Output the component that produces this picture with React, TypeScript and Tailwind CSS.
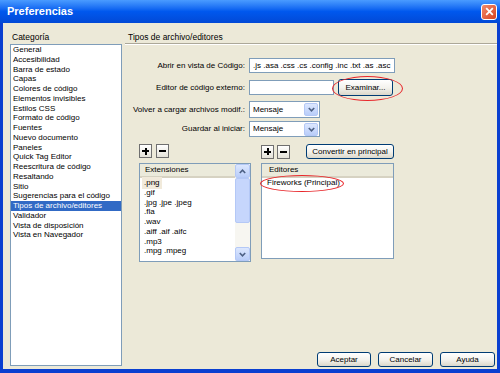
const categorias = [
  "General",
  "Accesibilidad",
  "Barra de estado",
  "Capas",
  "Colores de código",
  "Elementos invisibles",
  "Estilos CSS",
  "Formato de código",
  "Fuentes",
  "Nuevo documento",
  "Paneles",
  "Quick Tag Editor",
  "Reescritura de código",
  "Resaltando",
  "Sitio",
  "Sugerencias para el código",
  "Tipos de archivo/editores",
  "Validador",
  "Vista de disposición",
  "Vista en Navegador",
]

const extensiones = [
  ".png",
  ".gif",
  ".jpg .jpe .jpeg",
  ".fla",
  ".wav",
  ".aiff .aif .aifc",
  ".mp3",
  ".mpg .mpeg",
]

function XpButton({ label, className = "" }: { label: string; className?: string }) {
  return (
    <div
      className={`flex items-center justify-center rounded-[3px] border border-[#003C74] bg-linear-to-b from-white via-[#F4F3EE] to-[#DCD8CA] text-black ${className}`}
    >
      {label}
    </div>
  )
}

function SmallButton({ minus }: { minus?: boolean }) {
  return (
    <div className="flex h-[14px] w-[13px] items-center justify-center border border-[#6F6F6F] bg-linear-to-b from-white to-[#E4E2D8]">
      {minus ? (
        <div className="h-[2px] w-[7px] bg-black" />
      ) : (
        <div className="relative h-[7px] w-[7px]">
          <div className="absolute left-0 top-[2.5px] h-[2px] w-[7px] bg-black" />
          <div className="absolute left-[2.5px] top-0 h-[7px] w-[2px] bg-black" />
        </div>
      )}
    </div>
  )
}

function Chevron({ up }: { up?: boolean }) {
  return (
    <svg width="7" height="5" viewBox="0 0 7 5">
      <path
        d={up ? "M0.8 4 L3.5 1.2 L6.2 4" : "M0.8 1 L3.5 3.8 L6.2 1"}
        fill="none"
        stroke="#4D6185"
        strokeWidth="1.6"
      />
    </svg>
  )
}

function ArrowBox({ up, className = "" }: { up?: boolean; className?: string }) {
  return (
    <div
      className={`flex items-center justify-center rounded-[2px] border border-[#B4C8F6] bg-linear-to-b from-[#DCE7FE] to-[#B9CDF9] ${className}`}
    >
      <Chevron up={up} />
    </div>
  )
}

function Select({ value }: { value: string }) {
  return (
    <div className="flex h-full w-[71px] items-center border border-[#7F9DB9] bg-white pl-[3px] pr-[1px]">
      <span className="flex-1">{value}</span>
      <ArrowBox className="h-[13px] w-[14px]" />
    </div>
  )
}

export default function App() {
  return (
    <div className="relative flex h-[373px] w-[500px] flex-col overflow-hidden bg-[#0A3FD0] font-['Liberation_Sans',Arial,sans-serif] text-[8px] text-black">
      {/* Title bar */}
      <div className="flex h-[23px] items-center justify-between bg-linear-to-b from-[#4A9BFF] via-[#0058EE] to-[#0249D6] pl-[7px] pr-[3px]">
        <span className="text-[11px] font-bold text-white">Preferencias</span>
        <div className="flex h-[16px] w-[16px] items-center justify-center rounded-[3px] border border-white bg-linear-to-br from-[#F08A6A] to-[#D8401A]">
          <svg width="9" height="9" viewBox="0 0 9 9">
            <path d="M1.2 1.2 L7.8 7.8 M7.8 1.2 L1.2 7.8" stroke="white" strokeWidth="1.8" />
          </svg>
        </div>
      </div>

      {/* Body */}
      <div className="mx-[3px] mb-[4px] flex flex-1 bg-[#ECE9D8]">
        {/* Category column */}
        <div className="flex w-[119px] flex-col pb-[3px] pl-[7px] pt-[9px]">
          <div className="h-[10px] leading-[10px] pl-[2px] text-[8.5px]">Categoría</div>
          <div className="mt-[2px] flex-1 border border-[#7F9DB9] bg-white">
            {categorias.map((c) => (
              <div
                key={c}
                className={`h-[9.75px] whitespace-nowrap pl-[2px] leading-[9.75px] ${
                  c === "Tipos de archivo/editores" ? "bg-[#316AC5] text-white" : ""
                }`}
              >
                {c}
              </div>
            ))}
          </div>
        </div>

        {/* Settings panel */}
        <div className="ml-[3px] flex flex-1 flex-col">
          <div className="box-content h-[10px] pl-[3px] pt-[9px] text-[8.5px] leading-[10px]">Tipos de archivo/editores</div>
          <div className="mt-[1px] h-[1px] bg-[#ACA899]" />
          <div className="h-[1px] bg-white" />

          <div className="mt-[13px] flex flex-col">
            <div className="flex h-[15px] items-center">
              <div className="w-[124px] pr-[4px] text-right">Abrir en vista de Código:</div>
              <div className="flex h-full w-[146px] items-center whitespace-nowrap border border-[#7F9DB9] bg-white pl-[3px]">
                .js .asa .css .cs .config .inc .txt .as .asc
              </div>
            </div>
            <div className="mt-[6px] flex h-[17px] items-center">
              <div className="w-[124px] pr-[4px] text-right">Editor de código externo:</div>
              <div className="h-[15px] w-[85px] border border-[#7F9DB9] bg-white" />
              <XpButton label="Examinar..." className="ml-[4px] h-full w-[55px]" />
            </div>
            <div className="mt-[5px] flex h-[17px] items-center">
              <div className="w-[124px] whitespace-nowrap pr-[4px] text-right">Volver a cargar archivos modif.:</div>
              <Select value="Mensaje" />
            </div>
            <div className="mt-[3px] flex h-[16px] items-center">
              <div className="w-[124px] pr-[4px] text-right">Guardar al iniciar:</div>
              <Select value="Mensaje" />
            </div>
          </div>

          {/* Lists */}
          <div className="mt-[7px] flex gap-[10px] pl-[14px]">
            <div className="flex w-[112px] flex-col">
              <div className="flex h-[14px] gap-[4px]">
                <SmallButton />
                <SmallButton minus />
              </div>
              <div className="mt-[5px] flex h-[99px] border border-[#7F9DB9] bg-white">
                <div className="flex flex-1 flex-col overflow-hidden">
                  <div className="flex h-[14px] items-center border-b-2 border-[#D6D2C2] bg-[#EBEADB] pl-[5px]">
                    Extensiones
                  </div>
                  {extensiones.map((e) => (
                    <div key={e} className="flex h-[9.8px] items-center whitespace-nowrap pl-[2px]">
                      <span className={`px-[2px] ${e === ".png" ? "bg-[#F1EADB]" : ""}`}>{e}</span>
                    </div>
                  ))}
                </div>
                <div className="flex w-[15px] flex-col bg-[#F7F6F1]">
                  <ArrowBox up className="h-[14px] w-full" />
                  <div className="h-[45px] rounded-[2px] border border-[#B4C8F6] bg-[#C6D6FC]" />
                  <div className="flex-1" />
                  <ArrowBox className="h-[14px] w-full" />
                </div>
              </div>
            </div>

            <div className="flex w-[133px] flex-col">
              <div className="flex h-[15px] items-center gap-[3px]">
                <SmallButton />
                <SmallButton minus />
                <XpButton label="Convertir en principal" className="ml-[13px] h-[15px] flex-1" />
              </div>
              <div className="mt-[4px] flex h-[96px] flex-col border border-[#7F9DB9] bg-white">
                <div className="flex h-[14px] items-center border-b-2 border-[#D6D2C2] bg-[#EBEADB] pl-[7px]">
                  Editores
                </div>
                <div className="h-[10px] pl-[5px] leading-[10px]">Fireworks (Principal)</div>
              </div>
            </div>
          </div>

          {/* Dialog buttons */}
          <div className="mt-auto flex justify-end gap-[7px] pb-[2px] pr-[2px]">
            <XpButton label="Aceptar" className="h-[15px] w-[54px]" />
            <XpButton label="Cancelar" className="h-[15px] w-[55px]" />
            <XpButton label="Ayuda" className="h-[15px] w-[55px]" />
          </div>
        </div>
      </div>

      {/* Red annotation ellipses */}
      <div className="absolute left-[332px] top-[76px] h-[25px] w-[71px] rounded-[50%] border-[1.5px] border-[#E8262A]" />
      <div className="absolute left-[260px] top-[175px] h-[17px] w-[84px] rounded-[50%] border-[1.5px] border-[#E8262A]" />
    </div>
  )
}
